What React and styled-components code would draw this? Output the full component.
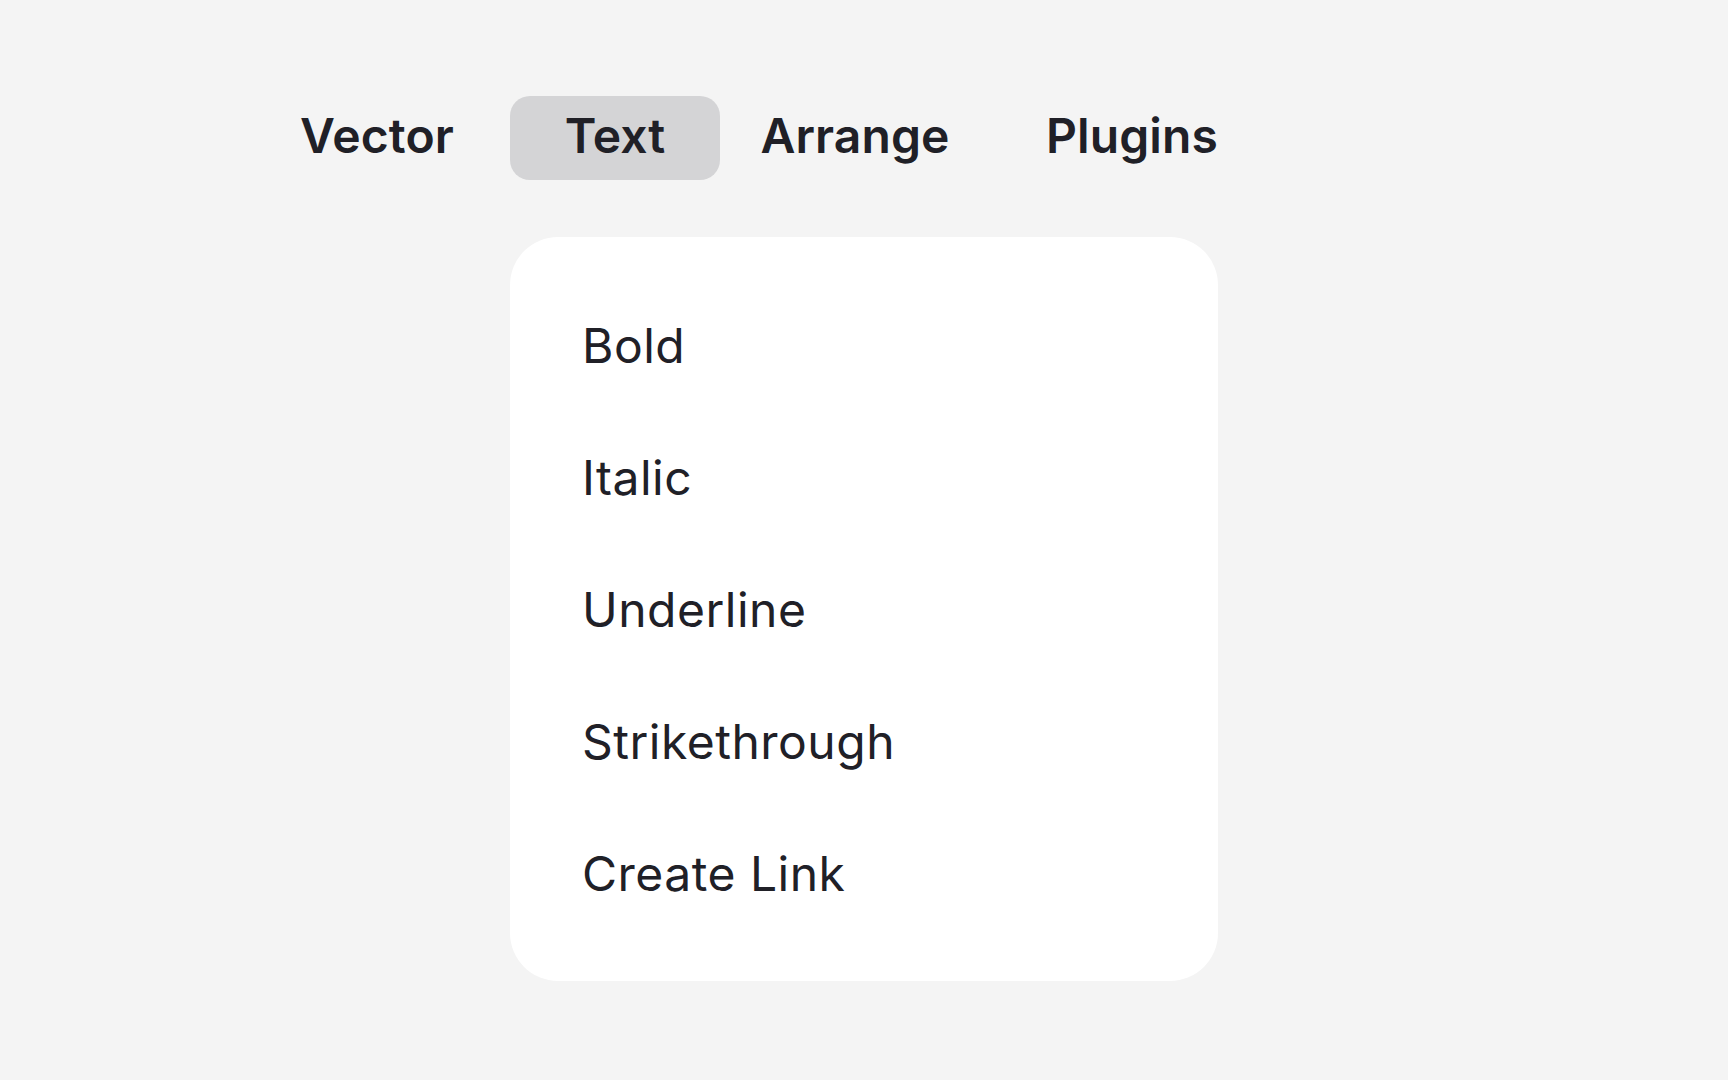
import React from "react";
import styled, { createGlobalStyle } from "styled-components";

const GlobalStyle = createGlobalStyle`
  html, body {
    margin: 0;
    padding: 0;
    background: #f4f4f4;
  }
  body {
    font-family: Inter, "Noto Sans", "Liberation Sans", sans-serif;
    color: #202027;
    -webkit-font-smoothing: antialiased;
  }
`;

const Page = styled.div`
  min-height: 1080px;
  box-sizing: border-box;
  padding: 96px 0 0 244px;
  display: flex;
  flex-direction: column;
  align-items: flex-start;
`;

const TabRow = styled.nav`
  display: grid;
  grid-template-columns: 266px 210px 270px 284px;
  justify-items: center;
  align-items: center;
`;

const Tab = styled.button`
  appearance: none;
  border: none;
  margin: 0;
  font-family: inherit;
  font-size: 48px;
  font-weight: 600;
  line-height: 60px;
  color: #202027;
  padding: 10px 0 14px;
  height: 84px;
  box-sizing: border-box;
  border-radius: 20px;
  cursor: pointer;
  width: ${(p) => (p.$active ? "100%" : "auto")};
  background: ${(p) => (p.$active ? "#d4d4d6" : "transparent")};
  letter-spacing: 0.1px;
`;

const Menu = styled.ul`
  list-style: none;
  margin: 57px 0 0 266px;
  padding: 43px 0 41px 0;
  width: 708px;
  box-sizing: border-box;
  background: #ffffff;
  border-radius: 48px;
`;

const MenuItem = styled.li`
  height: 132px;
  line-height: 132px;
  padding-left: 72px;
  font-size: 48px;
  font-weight: 400;
  color: #202027;
  letter-spacing: 0.5px;
`;

const tabs = ["Vector", "Text", "Arrange", "Plugins"];
const items = ["Bold", "Italic", "Underline", "Strikethrough", "Create Link"];

export default function App() {
  return (
    <>
      <GlobalStyle />
      <Page>
        <TabRow>
          {tabs.map((t) => (
            <Tab key={t} $active={t === "Text"}>
              {t}
            </Tab>
          ))}
        </TabRow>
        <Menu>
          {items.map((i) => (
            <MenuItem key={i}>{i}</MenuItem>
          ))}
        </Menu>
      </Page>
    </>
  );
}
